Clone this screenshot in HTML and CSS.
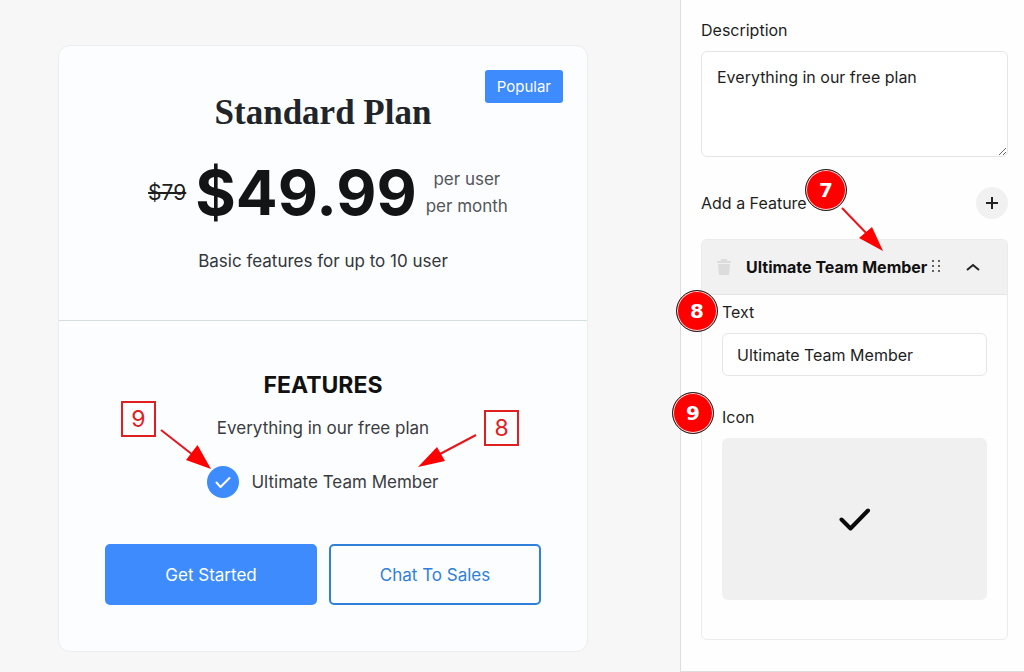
FILE: index.html
```html
<!DOCTYPE html>
<html lang="en">
<head>
    <meta charset="UTF-8">
    <meta name="viewport" content="width=device-width, initial-scale=1.0">
    <title>Pricing Card Editor</title>
    <link rel="stylesheet" href="styles.css">
</head>
<body>
    <div class="editor">
        <!-- Preview (Left) -->
        <main class="preview">
            <section class="card">
                <span class="badge">Popular</span>
                <div class="card-header">
                    <h1>Standard Plan</h1>
                    <div class="price-row">
                        <del class="old-price">$79</del>
                        <strong class="price">$49.99</strong>
                        <p class="period">per user<br>per month</p>
                    </div>
                    <p class="summary">Basic features for up to 10 user</p>
                </div>
                <div class="card-body">
                    <h2>FEATURES</h2>
                    <p class="features-text">Everything in our free plan</p>
                    <ul class="features">
                        <li>
                            <svg class="check" viewBox="0 0 32 32" aria-hidden="true">
                                <circle cx="16" cy="16" r="16"/>
                                <path d="M9.500 16.500l4 4.500 9-9"/>
                            </svg>
                            Ultimate Team Member
                        </li>
                    </ul>
                    <div class="button-container">
                        <button class="btn btn-primary" type="button">Get Started</button>
                        <button class="btn btn-outline" type="button">Chat To Sales</button>
                    </div>
                </div>

                <!-- Notes on the card -->
                <span class="note note-icon">9</span>
                <svg class="arrow arrow-icon" width="52" height="42" viewBox="0 0 52 42" aria-hidden="true">
                    <path class="line" d="M2 2l32 25"/>
                    <path class="head" d="M52 41l-25-9 11.500-15z"/>
                </svg>
                <span class="note note-text">8</span>
                <svg class="arrow arrow-text" width="60" height="34" viewBox="0 0 60 34" aria-hidden="true">
                    <path class="line" d="M58 1L22 20"/>
                    <path class="head" d="M0 33l19-20 8 14z"/>
                </svg>
            </section>
        </main>

        <!-- Settings (Right) -->
        <aside class="settings">
            <label for="description">Description</label>
            <textarea id="description">Everything in our free plan</textarea>

            <div class="add-row">
                <span>Add a Feature</span>
                <button class="add-btn" type="button" aria-label="Add">
                    <svg width="12" height="12" viewBox="0 0 12 12" aria-hidden="true"><path d="M6 0v12M0 6h12"/></svg>
                </button>
            </div>

            <div class="panel">
                <div class="panel-header">
                    <button class="icon-btn trash" type="button" aria-label="Delete">
                        <svg width="14" height="18" viewBox="0 0 14 18" aria-hidden="true">
                            <path d="M0 3h3.500l1-2h5l1 2H14v2H0z"/>
                            <path d="M1 6h12l-1 11H2z"/>
                        </svg>
                    </button>
                    <h3>Ultimate Team Member</h3>
                    <svg class="grip" width="12" height="16" viewBox="0 0 12 16" aria-hidden="true">
                        <circle cx="4" cy="2" r="1"/><circle cx="10" cy="2" r="1"/>
                        <circle cx="4" cy="7" r="1"/><circle cx="10" cy="7" r="1"/>
                        <circle cx="4" cy="12" r="1"/><circle cx="10" cy="12" r="1"/>
                    </svg>
                    <button class="icon-btn toggle" type="button" aria-label="Collapse">
                        <svg width="14" height="8" viewBox="0 0 14 8" aria-hidden="true"><path d="M1 7l6-5 6 5"/></svg>
                    </button>
                </div>
                <div class="panel-body">
                    <label for="feature-text">Text</label>
                    <input type="text" id="feature-text" value="Ultimate Team Member">
                    <label for="feature-icon">Icon</label>
                    <button class="icon-box" id="feature-icon" type="button">
                        <svg width="32" height="24" viewBox="0 0 32 24" aria-hidden="true"><path d="M2.500 12.500l9 9L29 3.500"/></svg>
                    </button>
                </div>
            </div>

            <!-- Step markers -->
            <span class="step step-7">7</span>
            <svg class="arrow arrow-step" width="44" height="46" viewBox="0 0 44 46" aria-hidden="true">
                <path class="line" d="M2 2l28 29"/>
                <path class="head" d="M43 45l-24-13 13-11z"/>
            </svg>
            <span class="step step-8">8</span>
            <span class="step step-9">9</span>
        </aside>
    </div>
</body>
</html>
```
FILE: styles.css
```css
* {
    box-sizing: border-box;
}
body {
    margin: 0;
    font-family: Inter, "Liberation Sans", sans-serif;
    font-size: 16px;
    line-height: 24px;
    color: #1e1e1e;
    background-color: #f7f7f7;
}
h1, h2, h3, p, ul {
    margin: 0;
    padding: 0;
}
button, input, textarea {
    font-family: inherit;
    font-size: 16px;
    color: inherit;
}
button {
    border: none;
    padding: 0;
    cursor: pointer;
}
.editor {
    display: flex;
    align-items: stretch;
}
.preview {
    flex: 1;
    padding: 45px 92px 20px 58px;
}

/* Pricing card */
.card {
    position: relative;
    border: 1px solid #e9eeee;
    border-radius: 12px;
    background-color: #fbfdff;
    text-align: center;
}
.badge {
    position: absolute;
    top: 24px;
    right: 24px;
    padding: 4px 12px;
    border-radius: 3px;
    background-color: #3d8bfd;
    color: white;
    font-size: 15px;
    line-height: 25px;
}
.card-header {
    padding: 45px 46px 46px;
    border-bottom: 1px solid #d5dfe2;
}
h1 {
    font-family: "Liberation Serif", serif;
    font-size: 35px;
    line-height: 44px;
    color: #212529;
}
.price-row {
    display: flex;
    justify-content: center;
    align-items: center;
    gap: 9px;
    margin-top: 20px;
    padding-left: 10px;
}
.old-price {
    font-size: 21px;
}
.price {
    font-size: 62px;
    line-height: 76px;
    color: #121416;
}
.period {
    font-size: 17px;
    line-height: 27px;
    color: #54565a;
}
.summary {
    margin-top: 17px;
    font-size: 17px;
    line-height: 26px;
    color: #33363a;
}
.card-body {
    padding: 49px 46px 46px;
}
h2 {
    font-size: 23px;
    line-height: 30px;
    color: #111;
}
.features-text {
    margin-top: 15px;
    font-size: 17px;
    line-height: 26px;
    color: #3a3c40;
}
.features {
    margin-top: 25px;
    list-style: none;
    font-size: 17px;
    color: #3a3c40;
}
.features li {
    display: flex;
    justify-content: center;
    align-items: center;
    gap: 12px;
}
.check {
    width: 32px;
    height: 32px;
    fill: #3d8bfd;
}
.check path {
    fill: none;
    stroke: white;
    stroke-width: 2;
    stroke-linecap: round;
    stroke-linejoin: round;
}
.button-container {
    display: flex;
    gap: 12px;
    margin-top: 46px;
}
.btn {
    flex: 1;
    height: 61px;
    border: 2px solid #3d8bfd;
    border-radius: 5px;
    font-size: 17px;
}
.btn-primary {
    background-color: #3d8bfd;
    color: white;
}
.btn-outline {
    border-color: #2f80d8;
    background-color: transparent;
    color: #2f80d8;
}

/* Settings sidebar */
.settings {
    position: relative;
    flex: 0 0 344px;
    padding: 18px 16px 31px 20px;
    border-left: 1px solid #ddd;
    border-bottom: 1px solid #ddd;
    background-color: #fefefe;
}
.settings label {
    display: block;
}
textarea, input {
    display: block;
    width: 100%;
    border: 1px solid #e6e6e6;
    border-radius: 6px;
    background-color: white;
}
textarea {
    height: 106px;
    margin-top: 9px;
    padding: 12px 15px;
    line-height: 26px;
    resize: vertical;
}
.add-row {
    display: flex;
    justify-content: space-between;
    align-items: center;
    margin-top: 30px;
}
.add-btn {
    display: flex;
    justify-content: center;
    align-items: center;
    width: 32px;
    height: 32px;
    border-radius: 50%;
    background-color: #f1f1f1;
}
.add-btn path, .toggle path {
    fill: none;
    stroke: #222;
    stroke-width: 2;
}
.panel {
    margin-top: 20px;
    border: 1px solid #ebebeb;
    border-radius: 6px;
}
.panel-header {
    display: flex;
    align-items: center;
    height: 55px;
    padding: 0 27px 0 15px;
    border-bottom: 1px solid #e6e6e6;
    background-color: #f1f1f1;
}
.icon-btn {
    display: flex;
    background-color: transparent;
}
.trash {
    margin-right: 15px;
    fill: #dcdcdc;
}
h3 {
    font-size: 16px;
    color: #111;
    white-space: nowrap;
}
.grip {
    margin-left: 2px;
    fill: #333;
}
.toggle {
    margin-left: auto;
}
.panel-body {
    padding: 5px 20px 39px;
}
input {
    height: 43px;
    margin: 9px 0 29px;
    padding: 0 14px;
}
.icon-box {
    display: flex;
    justify-content: center;
    align-items: center;
    width: 100%;
    height: 162px;
    margin-top: 9px;
    border-radius: 6px;
    background-color: #f0f0f0;
}
.icon-box path {
    fill: none;
    stroke: #0a0a0a;
    stroke-width: 4;
    stroke-linecap: round;
    stroke-linejoin: round;
}

/* Notes, markers and arrows lying over the page */
.note {
    position: absolute;
    width: 35px;
    height: 36px;
    border: 2px solid #e02020;
    color: #e02020;
    font-size: 23px;
    line-height: 33px;
}
.note-icon {
    top: 355px;
    left: 62px;
}
.note-text {
    top: 364px;
    left: 425px;
}
.arrow {
    position: absolute;
}
.arrow .line {
    fill: none;
    stroke: #e8141c;
    stroke-width: 2;
}
.arrow .head {
    fill: #f00;
}
.arrow-icon {
    top: 382px;
    left: 100px;
}
.arrow-text {
    top: 388px;
    left: 359px;
}
.step {
    position: absolute;
    width: 42px;
    height: 42px;
    border: 1px solid #222;
    border-radius: 50%;
    background-color: #f00;
    box-shadow: inset 0 0 0 1px #ffd5d5;
    color: white;
    font-family: "DejaVu Sans", sans-serif;
    font-size: 20px;
    font-weight: bold;
    line-height: 40px;
    text-align: center;
}
.step-7 {
    top: 169px;
    left: 124px;
}
.step-8 {
    top: 290px;
    left: -5px;
}
.step-9 {
    top: 392px;
    left: -9px;
}
.arrow-step {
    top: 206px;
    left: 159px;
}
```
